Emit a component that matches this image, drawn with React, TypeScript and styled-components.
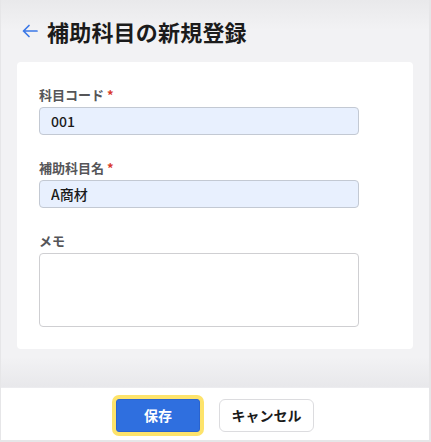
import styled, { createGlobalStyle } from 'styled-components';

const GlobalStyle = createGlobalStyle`
  html, body {
    margin: 0;
    padding: 0;
    background: #ffffff;
  }
  body {
    font-family: "Noto Sans CJK JP", "Noto Sans", sans-serif;
  }
  * {
    box-sizing: border-box;
  }
`;

interface Field {
  label: string;
  required?: boolean;
  value?: string;
  multiline?: boolean;
}

const fields: Field[] = [
  { label: '科目コード', required: true, value: '001' },
  { label: '補助科目名', required: true, value: 'A商材' },
  { label: 'メモ', multiline: true },
];

const App = () => {
  return (
    <>
      <GlobalStyle />
      <Frame>
        <Main>
          <Header>
            <BackButton aria-label="戻る">
              <svg width="18" height="18" viewBox="0 0 18 18" fill="none">
                <path
                  d="M16 9H2.5M8 3.5L2.5 9L8 14.5"
                  stroke="#3b78e6"
                  strokeWidth="1.7"
                  strokeLinecap="round"
                  strokeLinejoin="round"
                />
              </svg>
            </BackButton>
            <Title>補助科目の新規登録</Title>
          </Header>
          <Card>
            {fields.map((f) => (
              <FieldGroup key={f.label}>
                <Label>
                  {f.label}
                  {f.required && <Required>*</Required>}
                </Label>
                {f.multiline ? (
                  <TextArea defaultValue="" />
                ) : (
                  <Input defaultValue={f.value} />
                )}
              </FieldGroup>
            ))}
          </Card>
        </Main>
        <Footer>
          <SaveButton>保存</SaveButton>
          <CancelButton>キャンセル</CancelButton>
        </Footer>
      </Frame>
    </>
  );
};

export default App;

const Frame = styled.div`
  width: 431px;
  height: 442px;
  display: flex;
  flex-direction: column;
  border-left: 1px solid #e6e6e8;
  border-right: 2px solid #e6e6e8;
  border-bottom: 2px solid #e6e6e8;
  overflow: hidden;
`;

const Main = styled.div`
  flex: 1;
  display: flex;
  flex-direction: column;
  padding: 0 16px;
  background: linear-gradient(
    to bottom,
    #e9e9eb 0px,
    #f2f2f4 30px,
    #f2f2f4 calc(100% - 30px),
    #e8e8eb 100%
  );
`;

const Header = styled.div`
  height: 62px;
  display: flex;
  align-items: center;
  gap: 8px;
  padding-left: 4px;
  padding-bottom: 1px;
`;

const BackButton = styled.button`
  display: flex;
  align-items: center;
  justify-content: center;
  width: 18px;
  height: 18px;
  padding: 0;
  border: none;
  background: none;
  cursor: pointer;
`;

const Title = styled.h1`
  margin: 0;
  font-size: 22px;
  font-weight: 700;
  color: #1b1b1b;
  letter-spacing: 0.2px;
`;

const Card = styled.div`
  background: #ffffff;
  border-radius: 4px;
  padding: 24px 22px 22px;
  display: flex;
  flex-direction: column;
  gap: 24px;
`;

const FieldGroup = styled.div`
  display: flex;
  flex-direction: column;
  gap: 3px;
`;

const Label = styled.label`
  font-size: 13px;
  line-height: 18px;
  font-weight: 700;
  color: #555558;
`;

const Required = styled.span`
  color: #d93a2b;
  margin-left: 3px;
`;

const Input = styled.input`
  width: 320px;
  height: 28px;
  padding: 0 11px;
  border: 1px solid #c3c9d3;
  border-radius: 4px;
  background: #e8f0fe;
  font-family: inherit;
  font-size: 14px;
  font-weight: 500;
  color: #1b1b1b;
  outline: none;
`;

const TextArea = styled.textarea`
  width: 320px;
  height: 74px;
  padding: 6px 11px;
  border: 1px solid #cfcfd2;
  border-radius: 4px;
  background: #ffffff;
  font-family: inherit;
  font-size: 13px;
  resize: none;
  outline: none;
`;

const Footer = styled.div`
  height: 53px;
  flex-shrink: 0;
  background: #ffffff;
  border-top: 1px solid #ececef;
  display: flex;
  align-items: center;
  justify-content: center;
  gap: 19px;
  padding-top: 2px;
`;

const SaveButton = styled.button`
  width: 84px;
  height: 33px;
  border: 1px solid #2a63cf;
  border-radius: 3px;
  background: #2f6fdf;
  color: #ffffff;
  font-family: inherit;
  font-size: 14px;
  font-weight: 700;
  box-shadow: 0 0 0 4px #fde36b;
  cursor: pointer;
`;

const CancelButton = styled.button`
  width: 95px;
  height: 33px;
  border: 1px solid #dcdcdf;
  border-radius: 6px;
  background: #ffffff;
  color: #1b1b1b;
  font-family: inherit;
  font-size: 14px;
  font-weight: 700;
  cursor: pointer;
`;
